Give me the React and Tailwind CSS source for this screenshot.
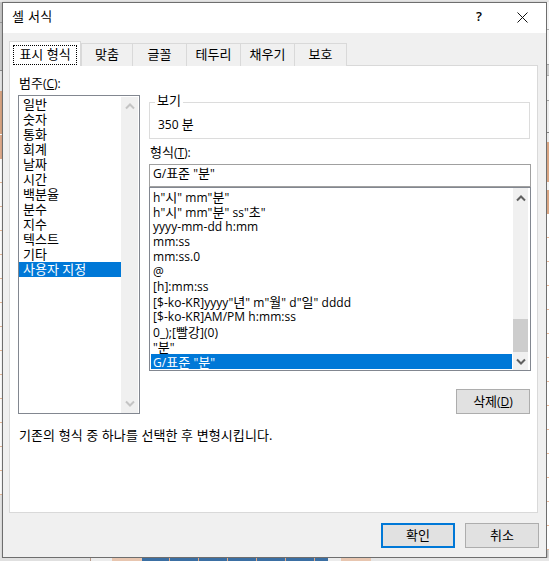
const FONT = "font-['Open_Sans','Noto_Sans_CJK_KR',sans-serif]";

const categories = ["일반", "숫자", "통화", "회계", "날짜", "시간", "백분율", "분수", "지수", "텍스트", "기타", "사용자 지정"];
const formats = [
  'h"시" mm"분"',
  'h"시" mm"분" ss"초"',
  "yyyy-mm-dd h:mm",
  "mm:ss",
  "mm:ss.0",
  "@",
  "[h]:mm:ss",
  '[$-ko-KR]yyyy"년" m"월" d"일" dddd',
  "[$-ko-KR]AM/PM h:mm:ss",
  "0_);[빨강](0)",
  '"분"',
  'G/표준 "분"',
];

// Hangul runs sit one pixel larger than the Latin text, as in the reference.
function K({ children }) {
  return String(children)
    .split(/([가-힣]+(?: [가-힣]+)*)/)
    .map((part, i) =>
      /[가-힣]/.test(part) ? (
        <span key={i} className="text-[13px]">{part}</span>
      ) : (
        part
      )
    );
}

function Chevron({ up, color }) {
  return (
    <svg width="10" height="7" viewBox="0 0 10 7" className="block">
      <path d={up ? "M1 5.5 L5 1.5 L9 5.5" : "M1 1.5 L5 5.5 L9 1.5"} fill="none" stroke={color} strokeWidth="2" />
    </svg>
  );
}

function Tab({ label, w }) {
  return (
    <div className={`${w} h-[23px] mt-[2px] -ml-px flex items-center justify-center border border-b-0 border-[#d9d9d9] bg-[#f0f0f0] text-[13px]`}>
      {label}
    </div>
  );
}

function Btn({ children, className = "" }) {
  return (
    <button className={`w-[74px] flex items-center justify-center bg-[#e1e1e1] text-[12px] text-black ${className}`}>
      {children}
    </button>
  );
}

function StripeCol({ items, className = "" }) {
  return (
    <div className={`flex flex-col w-[2px] ${className}`}>
      {items.map(([h, c], i) => (
        <div key={i} className="w-full shrink-0" style={{ height: h, background: c }} />
      ))}
    </div>
  );
}

const ticks = Array.from({ length: 14 }).flatMap(() => [[23, "#ffffff"], [1, "#e8b898"]]);
const leftItems = [[20, "#c8c8c8"], [1, "#9a9a9a"], [47, "#c8c8c8"], [1, "#8a8a8a"], [20, "#e6e6e6"], [43, "#d9a583"], [1, "#ffffff"], [24, "#e0ab8c"], ...ticks];
const rightItems = [[27, "#f4f4f4"], [1, "#b0b0b0"], [34, "#f4f4f4"], [1, "#a0a0a0"], [10, "#d0d0d0"], [1, "#b0b0b0"], [24, "#f4f4f4"], [1, "#a0a0a0"], [31, "#ececec"], [1, "#808080"], [9, "#ececec"], [40, "#d9a583"], [8, "#f4f4f4"], [24, "#d9a583"], ...ticks];

export default function App() {
  return (
    <div className={`w-[549px] h-[561px] overflow-hidden flex flex-col bg-[#f4f4f4] text-black ${FONT}`}>
      <div className="h-[2px] shrink-0 bg-[#e8e8e8]" />
      <div className="flex h-[556px] shrink-0">
        <StripeCol items={leftItems} className="bg-[#e6e6e6]" />
        <div className="w-[545px] h-[556px] border border-[#6e6e6e] bg-[#f0f0f0] flex flex-col shadow-[1px_1px_3px_rgba(0,0,0,0.35)]">
          {/* Title bar */}
          <div className="h-[30px] shrink-0 bg-white flex items-center pl-[9px] pb-[2px]">
            <span className="text-[13px] tracking-[0.3px]">셀 서식</span>
            <span className="ml-auto text-[13px] font-semibold mr-[35px]">?</span>
            <svg width="11" height="11" viewBox="0 0 11 11" className="mr-[18px]">
              <path d="M0.5 0.5 L10.5 10.5 M10.5 0.5 L0.5 10.5" stroke="#111" strokeWidth="1" />
            </svg>
          </div>

          {/* Tabs */}
          <div className="flex h-[25px] mt-[8px] ml-[6px] relative z-10 shrink-0">
            <div className="w-[72px] h-[25px] bg-white border border-b-0 border-[#d9d9d9] p-[3px] pb-[1px]">
              <div className="h-full border border-dotted border-black flex items-center justify-center text-[13px]">표시 형식</div>
            </div>
            <Tab label="맞춤" w="w-[52px] ml-0" />
            <Tab label="글꼴" w="w-[55px]" />
            <Tab label="테두리" w="w-[55px]" />
            <Tab label="채우기" w="w-[55px]" />
            <Tab label="보호" w="w-[53px]" />
          </div>

          {/* Panel */}
          <div className="w-[529px] h-[448px] -mt-px ml-[6px] shrink-0 bg-white border border-[#d9d9d9] pl-[8px] pt-[10px] flex flex-col">
            <div className="flex gap-[9px]">
              {/* Left column */}
              <div className="w-[122px]">
                <div className="h-[19px] text-[12px] leading-[15px] pl-px">
                  <K>범주</K>(<span className="underline">C</span>):
                </div>
                <div className="h-[319px] border border-[#828790] flex">
                  <div className="w-[102px] pt-px">
                    {categories.map((c, i) => (
                      <div
                        key={c}
                        className={`h-[15px] leading-[15px] text-[13px] pl-[4px] ${i === 11 ? "bg-[#0078d7] text-white" : ""}`}
                      >
                        {c}
                      </div>
                    ))}
                  </div>
                  <div className="w-[17px] bg-[#f0f0f0] flex flex-col items-center justify-between py-[6px] mt-px">
                    <Chevron up color="#c4c4c4" />
                    <Chevron color="#c4c4c4" />
                  </div>
                </div>
              </div>

              {/* Right column */}
              <div className="w-[382px] pt-[26px] flex flex-col">
                <div className="relative h-[37px] w-[381px] border border-[#dcdcdc] pl-[8px] pt-[13px] text-[12px] leading-[16px]">
                  <span className="absolute -top-[11px] left-[5px] bg-white px-[2px] text-[13px] leading-[16px]">보기</span>
                  <K>350 분</K>
                </div>
                <div className="h-[16px] mt-[5px] text-[12px] leading-[16px] pl-px">
                  <K>형식</K>(<span className="underline">T</span>):
                </div>
                <div className="h-[23px] mt-[4px] border border-[#a0a0a0] pl-[3px] text-[12px] leading-[17px]">
                  <K>{'G/표준 "분"'}</K>
                </div>
                <div className="h-[184px] border border-[#828790] flex pl-px">
                  <div className="w-[361px] pt-px">
                    {formats.map((f, i) => (
                      <div
                        key={f}
                        className={`h-[15px] leading-[16px] text-[12px] tracking-[0.05px] pl-[2px] whitespace-pre ${i === 11 ? "bg-[#0078d7] text-white" : ""}`}
                      >
                        <K>{f}</K>
                      </div>
                    ))}
                  </div>
                  <div className="w-[15px] ml-px bg-[#f0f0f0] flex flex-col items-center pt-[7px]">
                    <Chevron up color="#606060" />
                    <div className="mt-auto w-full h-[33px] bg-[#cdcdcd]" />
                    <div className="h-[18px] flex items-center">
                      <Chevron color="#606060" />
                    </div>
                  </div>
                </div>
                <div className="flex justify-end mt-[18px] pr-px">
                  <Btn className="h-[25px] border border-[#adadad]">
                    <span><K>삭제</K>(<span className="underline">D</span>)</span>
                  </Btn>
                </div>
              </div>
            </div>
            <div className="mt-[13px] pl-px text-[13px] tracking-[0.1px] leading-[16px]">기존의 형식 중 하나를 선택한 후 변형시킵니다.</div>
          </div>

          {/* Footer buttons */}
          <div className="flex justify-end gap-[10px] mt-[10px] pr-[7px]">
            <Btn className="h-[25px] border-2 border-[#0078d7] text-[13px]"><K>확인</K></Btn>
            <Btn className="h-[25px] border border-[#adadad] text-[13px]"><K>취소</K></Btn>
          </div>
        </div>
        <StripeCol items={rightItems} />
      </div>
      {/* Sheet visible below the dialog */}
      <div className="flex flex-1 bg-[#e6e6e6]">
        <div className="w-[91px] bg-[#e0e0e0] border-r border-[#b89a8a]" />
        <div className="w-[21px] bg-[#ececec]" />
        <div className="w-[30px] bg-[#e8c6b0]" />
        {[28, 29, 29, 29, 29, 29].map((w, i) => (
          <div key={i} className="bg-[#3b6fa3] border-r border-[#e0a985]" style={{ width: w }} />
        ))}
        <div className="w-[13px] bg-[#3b6fa3]" />
        <div className="w-[13px] bg-[#ececec]" />
        <div className="w-[30px] bg-[#e8c6b0]" />
      </div>
    </div>
  );
}
